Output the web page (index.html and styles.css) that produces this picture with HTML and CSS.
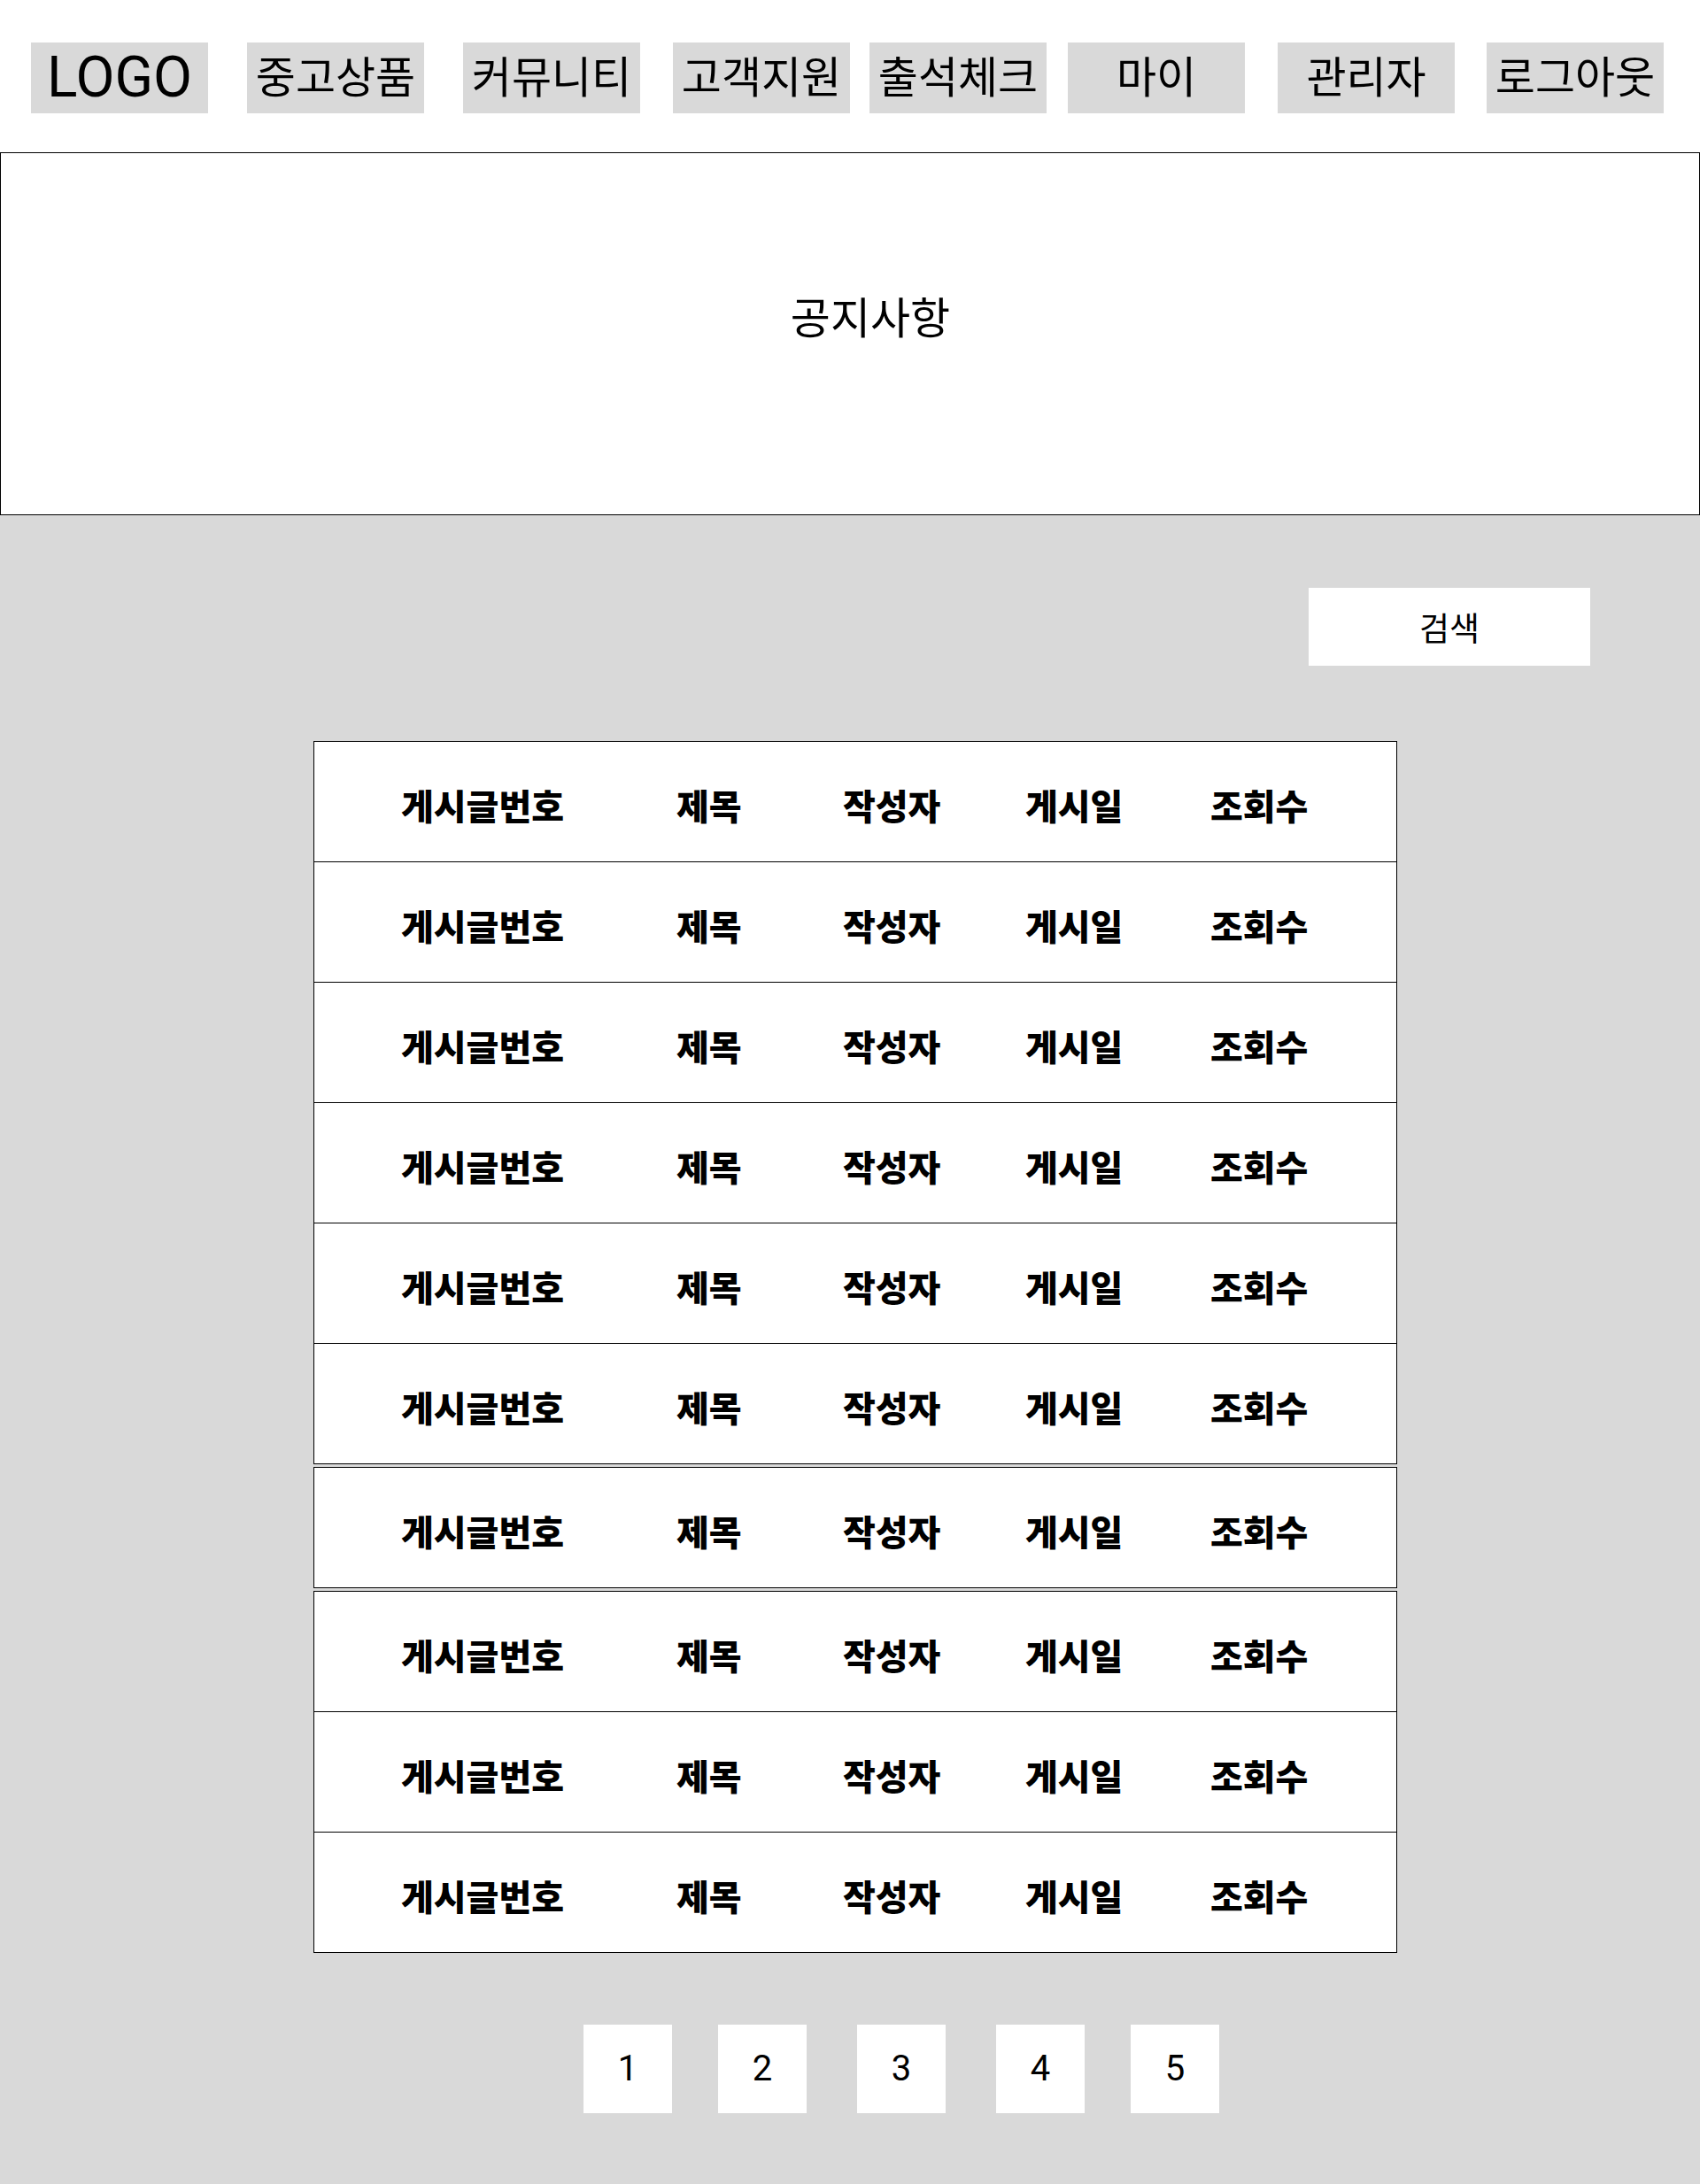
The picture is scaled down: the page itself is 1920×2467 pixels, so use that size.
FILE: index.html
```html
<!DOCTYPE html>
<html lang="ko">
    <head>
        <meta charset="UTF-8" />
        <meta name="viewport" content="width=device-width, initial-scale=1.0" />
        <title>공지사항</title>
        <link rel="stylesheet" href="styles.css">
    </head>
    <body>
        <header id="nav">
            <a class="nav-item logo" href="#">LOGO</a>
            <a class="nav-item" href="#">중고상품</a>
            <a class="nav-item" href="#">커뮤니티</a>
            <a class="nav-item" href="#">고객지원</a>
            <a class="nav-item" href="#">출석체크</a>
            <a class="nav-item" href="#">마이</a>
            <a class="nav-item" href="#">관리자</a>
            <a class="nav-item" href="#">로그아웃</a>
        </header>
        <section id="notice">
            <h1 id="notice-title">공지사항</h1>
        </section>
        <main id="board">
            <div id="search-bar">
                <button id="search">검색</button>
            </div>
            <div id="post-list">
                <div class="post-row"><span>게시글번호</span><span>제목</span><span>작성자</span><span>게시일</span><span>조회수</span></div>
                <div class="post-row"><span>게시글번호</span><span>제목</span><span>작성자</span><span>게시일</span><span>조회수</span></div>
                <div class="post-row"><span>게시글번호</span><span>제목</span><span>작성자</span><span>게시일</span><span>조회수</span></div>
                <div class="post-row"><span>게시글번호</span><span>제목</span><span>작성자</span><span>게시일</span><span>조회수</span></div>
                <div class="post-row"><span>게시글번호</span><span>제목</span><span>작성자</span><span>게시일</span><span>조회수</span></div>
                <div class="post-row"><span>게시글번호</span><span>제목</span><span>작성자</span><span>게시일</span><span>조회수</span></div>
                <div class="post-row apart"><span>게시글번호</span><span>제목</span><span>작성자</span><span>게시일</span><span>조회수</span></div>
                <div class="post-row apart"><span>게시글번호</span><span>제목</span><span>작성자</span><span>게시일</span><span>조회수</span></div>
                <div class="post-row"><span>게시글번호</span><span>제목</span><span>작성자</span><span>게시일</span><span>조회수</span></div>
                <div class="post-row"><span>게시글번호</span><span>제목</span><span>작성자</span><span>게시일</span><span>조회수</span></div>
            </div>
            <nav id="pages">
                <a class="page" href="#">1</a>
                <a class="page" href="#">2</a>
                <a class="page" href="#">3</a>
                <a class="page" href="#">4</a>
                <a class="page" href="#">5</a>
            </nav>
        </main>
    </body>
</html>
```
FILE: styles.css
```css
body {
    margin: 0;
    background: #d9d9d9;
    color: #000;
    font-family: Roboto, "Noto Sans CJK KR", sans-serif;
}
a {
    color: inherit;
    text-decoration: none;
}

#nav {
    display: flex;
    box-sizing: border-box;
    height: 172px;
    padding: 48px 0 0 35px;
    background: white;
}
.nav-item {
    display: flex;
    align-items: center;
    justify-content: center;
    width: 200px;
    height: 80px;
    background: #d9d9d9;
    font-size: 49px;
    line-height: 1;
}
.nav-item + .nav-item {
    margin-left: 44px;
}
.nav-item:nth-child(4) {
    margin-left: 37px;
}
.nav-item:nth-child(5) {
    margin-left: 22px;
}
.nav-item:nth-child(6) {
    margin-left: 24px;
}
.nav-item:nth-child(7) {
    margin-left: 37px;
}
.nav-item:nth-child(8) {
    margin-left: 36px;
}
.logo {
    font-size: 64px;
}

#notice {
    box-sizing: border-box;
    height: 410px;
    border: 1px solid black;
    background: white;
}
#notice-title {
    margin: 0;
    padding: 163px 0 0 46px;
    text-align: center;
    font-size: 49px;
    font-weight: normal;
    line-height: 1;
}

#board {
    padding: 82px 0 79px;
}
#search-bar {
    display: flex;
    justify-content: flex-end;
    padding-right: 124px;
}
#search {
    width: 318px;
    height: 88px;
    border: none;
    background: white;
    font-family: "Noto Sans CJK KR", sans-serif;
    font-size: 37px;
    padding: 0;
}

#post-list {
    width: 1224px;
    margin: 85px 0 0 354px;
}
.post-row {
    display: grid;
    grid-template-columns: 311px 188px 206px 209px auto;
    align-items: center;
    box-sizing: border-box;
    height: 137px;
    padding: 6px 0 0 98px;
    border: 1px solid black;
    background: white;
    font-family: "Noto Sans CJK KR", sans-serif;
    font-size: 40px;
    font-weight: 900;
}
.post-row + .post-row {
    margin-top: -1px;
}
.post-row.apart {
    margin-top: 3px;
}

#pages {
    display: flex;
    margin-top: 81px;
    padding-left: 659px;
}
.page {
    display: flex;
    align-items: center;
    justify-content: center;
    width: 100px;
    height: 100px;
    background: white;
    font-size: 40px;
    line-height: 1;
}
.page + .page {
    margin-left: 52px;
}
.page:nth-child(3),
.page:nth-child(4) {
    margin-left: 57px;
}
```
